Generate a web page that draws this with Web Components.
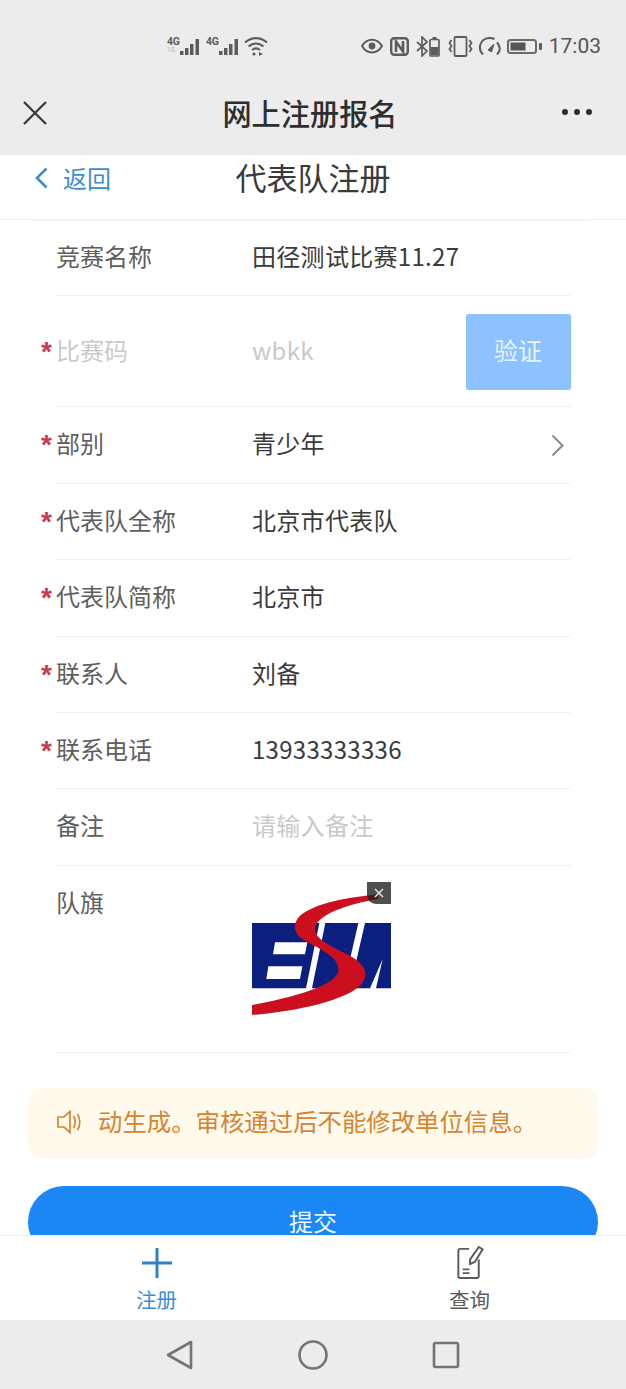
<!DOCTYPE html>
<html lang="zh-CN">
<head>
<meta charset="utf-8">
<title>网上注册报名</title>
<style>
  html, body { margin: 0; padding: 0; background: #fff; }
  body { font-family: "Noto Sans CJK SC", "Noto Sans", sans-serif; }
</style>
</head>
<body>
<reg-app>
  <phone-status></phone-status>
  <title-bar>网上注册报名</title-bar>
  <reg-main>
    <page-head>代表队注册</page-head>
    <form-row label="竞赛名称">田径测试比赛11.27</form-row>
    <form-row label="比赛码" required muted>wbkk<verify-button slot="action">验证</verify-button></form-row>
    <form-row label="部别" required arrow>青少年</form-row>
    <form-row label="代表队全称" required>北京市代表队</form-row>
    <form-row label="代表队简称" required>北京市</form-row>
    <form-row label="联系人" required>刘备</form-row>
    <form-row label="联系电话" required>13933333336</form-row>
    <form-row label="备注" placeholder>请输入备注</form-row>
    <form-row label="队旗" top><team-flag></team-flag></form-row>
    <notice-bar>动生成。审核通过后不能修改单位信息。</notice-bar>
    <submit-button>提交</submit-button>
  </reg-main>
  <tab-bar></tab-bar>
  <nav-keys></nav-keys>
</reg-app>

<script>
// page shell: just a column, the middle part takes what is left
class RegApp extends HTMLElement {
  constructor() {
    super();
    this.attachShadow({ mode: 'open' });
    this.shadowRoot.innerHTML = `
      <style>
        :host { display: flex; flex-direction: column; height: 100vh; overflow: hidden; }
      </style>
      <slot></slot>
    `;
  }
}

class PhoneStatus extends HTMLElement {
  constructor() {
    super();
    this.attachShadow({ mode: 'open' });
    const bars = `
      <svg width="20" height="18" viewBox="0 0 20 18" fill="#5c5c5c">
        <rect x="0" y="13" width="3.500" height="4"/><rect x="5" y="10" width="3.500" height="7"/>
        <rect x="10" y="6" width="3.500" height="11"/><rect x="15.500" y="1" width="3.500" height="16"/>
      </svg>`;
    this.shadowRoot.innerHTML = `
      <style>
        :host {
          display: flex; align-items: center; box-sizing: border-box; flex: none;
          height: 62px; padding: 30px 25px 0 167px; background: #ececec;
          color: #5c5c5c; font-family: Roboto, "Liberation Sans", sans-serif;
        }
        .sig { display: flex; align-items: flex-end; height: 20px; position: relative; }
        .g { font-size: 10.500px; font-weight: 700; line-height: 10px; width: 13px; align-self: flex-start; margin-top: 1px; letter-spacing: -.3px; }
        .g small { display: block; font-size: 7px; line-height: 7px; font-weight: 400; color: #b5b5b5; }
        .s1 { margin-right: 6px; }
        .s2 { margin-right: 5px; }
        .right { margin-left: auto; display: flex; align-items: center; }
        svg { display: block; }
        .time { font-size: 21px; line-height: 32px; margin-left: 7px; color: #555; }
      </style>
      <div class="sig s1"><span class="g">4G<small>1S</small></span>${bars}</div>
      <div class="sig s2"><span class="g">4G</span>${bars}</div>
      <svg width="24" height="20" viewBox="0 0 24 20" fill="none" stroke="#5c5c5c" stroke-width="2.200">
        <path d="M1 6.500C7.500 .6 16.500 .6 23 6.500"/><path d="M4.500 10.500C9 6.500 15 6.500 19.500 10.500"/><path d="M8 14c2.500-2 5.500-2 8 0"/>
        <circle cx="10" cy="18" r="1.600" fill="#5c5c5c" stroke="none"/><path d="M15 16l4 2-4 2z" fill="#5c5c5c" stroke="none"/>
      </svg>
      <div class="right">
        <svg width="22" height="16" viewBox="0 0 22 16" fill="none" stroke="#5c5c5c" stroke-width="2">
          <path d="M1 8c5-8.500 15-8.500 20 0c-5 8.500-15 8.500-20 0z"/><circle cx="11" cy="8" r="3.400" fill="#5c5c5c" stroke="none"/>
        </svg>
        <svg style="margin-left:7px" width="19" height="19" viewBox="0 0 19 19" fill="none" stroke="#5c5c5c">
          <rect x="1.200" y="1.200" width="16.600" height="16.600" rx="3" stroke-width="2.400"/>
          <path d="M6 15V4.500L13 14.500V4" stroke-width="2.600"/>
        </svg>
        <svg style="margin-left:7px" width="24" height="21" viewBox="0 0 24 21" fill="none" stroke="#5c5c5c" stroke-width="1.700">
          <path d="M1 6l10 9-5 5V1l5 5L1 15"/>
          <rect x="14" y="3.500" width="9" height="16.500" rx="1"/><rect x="16.500" y="1" width="4" height="2" fill="#5c5c5c" stroke="none"/>
          <rect x="15" y="11" width="7" height="8" fill="#5c5c5c" stroke="none"/>
        </svg>
        <svg style="margin-left:8px" width="25" height="21" viewBox="0 0 25 21" fill="none" stroke="#5c5c5c" stroke-width="1.800">
          <rect x="6.500" y="1" width="12" height="19" rx="1"/>
          <path d="M3.500 4l-2 3 2 3-2 3 2 3M21.500 4l2 3-2 3 2 3-2 3"/>
        </svg>
        <svg style="margin-left:5px" width="24" height="20" viewBox="0 0 24 20" fill="none" stroke="#5c5c5c" stroke-width="2">
          <path d="M5 18.500C-.5 13 1.500 3 11 2c2.500-.2 4 .3 5.500 1"/><path d="M19 6.500c3.500 4 3.500 8.500 0 12"/>
          <path d="M10 14l6-6-2.500 8z" fill="#5c5c5c" stroke-width="1"/>
        </svg>
        <svg style="margin-left:5px" width="35" height="15" viewBox="0 0 35 15" fill="none">
          <rect x="1" y="1" width="28" height="13" rx="2.500" stroke="#6a6a6a" stroke-width="2"/>
          <rect x="3.500" y="3.500" width="15" height="8" fill="#565656"/>
          <rect x="32" y="4" width="3" height="7" rx="1" fill="#5c5c5c"/>
        </svg>
        <span class="time">17:03</span>
      </div>
    `;
  }
}

class TitleBar extends HTMLElement {
  constructor() {
    super();
    this.attachShadow({ mode: 'open' });
    this.shadowRoot.innerHTML = `
      <style>
        :host {
          display: flex; align-items: center; justify-content: center; position: relative; flex: none;
          box-sizing: border-box; height: 93px; padding: 7px 0 0; background: #ececec;
        }
        .t { font-size: 29.200px; font-weight: 500; color: #2e2e2e; line-height: 40px; position: relative; left: -3px; }
        svg { position: absolute; }
        .x { left: 22px; top: 38px; }
        .more { right: 32px; top: 46px; }
      </style>
      <svg class="x" width="26" height="26" viewBox="0 0 26 26" stroke="#3a3a3a" stroke-width="2.300" fill="none">
        <path d="M2 2l22 22M24 2L2 24"/>
      </svg>
      <span class="t"><slot></slot></span>
      <svg class="more" width="33" height="8" viewBox="0 0 33 8" fill="#2e2e2e">
        <circle cx="4" cy="4" r="3"/><circle cx="16" cy="4" r="3"/><circle cx="28" cy="4" r="3"/>
      </svg>
    `;
  }
}

class RegMain extends HTMLElement {
  constructor() {
    super();
    this.attachShadow({ mode: 'open' });
    this.shadowRoot.innerHTML = `
      <style>
        :host { display: block; flex: 1; min-height: 0; overflow: hidden; background: #fff; }
      </style>
      <slot></slot>
    `;
  }
}

class PageHead extends HTMLElement {
  constructor() {
    super();
    this.attachShadow({ mode: 'open' });
    this.shadowRoot.innerHTML = `
      <style>
        :host {
          display: flex; align-items: center; position: relative; box-sizing: border-box;
          height: 65px; padding: 0 0 19px 35px; border-bottom: 1px solid #f3f3f3;
        }
        :host::after {
          content: ''; position: absolute; left: 32px; right: 36px; bottom: -2px;
          height: 1px; background: #f5f5f5;
        }
        .back { display: flex; align-items: center; gap: 15px; color: #3d8ed0; font-size: 24px; line-height: 44px; }
        .t {
          position: absolute; left: 0; right: 0; top: -2px; text-align: center;
          font-size: 31px; line-height: 48px; color: #3a3a3a; pointer-events: none;
        }
      </style>
      <div class="back">
        <svg width="13" height="22" viewBox="0 0 13 22" fill="none" stroke="#3d8ed0" stroke-width="2.600"><path d="M11.500 1.500L2 11l9.500 9.500"/></svg>
        <span>返回</span>
      </div>
      <div class="t"><slot></slot></div>
    `;
  }
}

// one line of the form. label comes as attribute, value as slot
class FormRow extends HTMLElement {
  constructor() {
    super();
    this.attachShadow({ mode: 'open' });
    const req = this.hasAttribute('required');
    const label = this.getAttribute('label') || '';
    this.shadowRoot.innerHTML = `
      <style>
        :host {
          display: grid; grid-template-columns: 196px 1fr auto; align-items: center;
          margin: 0 55.500px 0 56px; border-bottom: 1px solid #f1f1f1;
          font-size: 24px; color: #3a3a3a;
        }
        :host([top]) { align-items: start; }
        .label { line-height: 71.400px; padding-bottom: 4px; color: #5e5e5e; white-space: nowrap; }
        .star {
          display: inline-block; width: 15px; margin-left: -15px; color: #c93a55;
          font: 700 28px/0 "Liberation Sans", sans-serif; vertical-align: -1px;
        }
        .value { line-height: 71.400px; padding-bottom: 4px; letter-spacing: .3px; }
        :host([top]) .value { padding-bottom: 0; line-height: 1; }
        :host([muted]) .label, :host([muted]) .value, :host([placeholder]) .value { color: #c9c9c9; }
        .arrow { margin-right: 7px; display: block; }
        slot[name=action] { display: block; }
      </style>
      <div class="label">${req ? '<span class="star">*</span>' : ''}${label}</div>
      <div class="value"><slot></slot></div>
      <slot name="action">
        ${this.hasAttribute('arrow')
          ? '<svg class="arrow" width="13" height="23" viewBox="0 0 13 23" fill="none" stroke="#8a8a8a" stroke-width="2"><path d="M1.500 1.500l10 10-10 10"/></svg>'
          : ''}
      </slot>
    `;
  }
}

class VerifyButton extends HTMLElement {
  constructor() {
    super();
    this.attachShadow({ mode: 'open' });
    this.shadowRoot.innerHTML = `
      <style>
        :host {
          display: flex; align-items: center; justify-content: center; box-sizing: border-box;
          width: 105px; height: 76px; margin: 18px 0 16px; padding-bottom: 5px; border-radius: 3px;
          background: #8cc2ff; color: #e9f3ff; font-size: 24px;
        }
      </style>
      <slot></slot>
    `;
  }
}

class TeamFlag extends HTMLElement {
  constructor() {
    super();
    this.attachShadow({ mode: 'open' });
    this.shadowRoot.innerHTML = `
      <style>
        :host { display: block; position: relative; width: 139px; height: 140px; margin: 15px 0 31px; overflow: hidden; }
        svg.logo { display: block; filter: blur(.7px); }
        .del {
          position: absolute; right: 0; top: 1px; width: 24px; height: 22px;
          background: rgba(30, 30, 30, .78); border-bottom-left-radius: 9px;
          display: flex; align-items: center; justify-content: center;
        }
      </style>
      <svg class="logo" width="139" height="140" viewBox="6 6 417 420">
        <path fill="#0b1f7f" fill-rule="evenodd" d="M6 132H208L168 328H6ZM75 190L69 226H165L172 190ZM55 262L49 300H150L157 262Z"/>
        <path fill="#0b1f7f" d="M226 132H325L280 328H186Z"/>
        <path fill="#0b1f7f" d="M345 132H423V328H378L398 240L360 328H300Z"/>
        <path fill="#cc0f1f" d="M385 46C300 55 200 70 150 110C125 135 130 165 165 185C210 210 270 235 265 275C260 310 180 345 6 378V408C150 395 280 365 330 320C365 285 340 250 290 225C240 200 195 180 195 150C195 110 290 75 385 60Z"/>
      </svg>
      <div class="del">
        <svg width="10" height="10" viewBox="0 0 10 10" stroke="#eee" stroke-width="1.400"><path d="M1 1l8 8M9 1L1 9"/></svg>
      </div>
    `;
  }
}

class NoticeBar extends HTMLElement {
  constructor() {
    super();
    this.attachShadow({ mode: 'open' });
    this.shadowRoot.innerHTML = `
      <style>
        :host {
          display: flex; align-items: center; box-sizing: border-box;
          height: 69px; margin: 35px 28px 0; padding: 0 0 3px 29px; border-radius: 14px;
          background: #fffaeb; box-shadow: 0 1px 2px rgba(0, 0, 0, .04);
          color: #d6842f; font-size: 24.400px; white-space: nowrap; overflow: hidden;
        }
        svg { display: block; margin: 3px 16px 0 0; flex: none; }
      </style>
      <svg width="25" height="24" viewBox="0 0 25 24" fill="none" stroke="#d6842f" stroke-width="1.700">
        <path d="M1 7h6l6-5.500v21L7 17H1z"/><path d="M16.500 6c2 3.500 2 8.500 0 12"/><path d="M20.500 4c3 4.500 3 11.500 0 16"/>
      </svg>
      <span><slot></slot></span>
    `;
  }
}

class SubmitButton extends HTMLElement {
  constructor() {
    super();
    this.attachShadow({ mode: 'open' });
    this.shadowRoot.innerHTML = `
      <style>
        :host {
          display: flex; align-items: center; justify-content: center; box-sizing: border-box;
          height: 72px; margin: 29px 28px 0; padding-bottom: 1px; border-radius: 36px;
          background: #1a87f5; color: #eef6ff; font-size: 24px; line-height: 24px;
        }
      </style>
      <slot></slot>
    `;
  }
}

class TabBar extends HTMLElement {
  constructor() {
    super();
    this.attachShadow({ mode: 'open' });
    this.shadowRoot.innerHTML = `
      <style>
        :host {
          display: grid; grid-template-columns: 1fr 1fr; box-sizing: border-box;
          height: 85px; border-top: 1px solid #eee; background: #fff; flex: none;
        }
        .tab { display: flex; flex-direction: column; align-items: center; justify-content: flex-end; padding-bottom: 7px; font-size: 20.500px; line-height: 28px; color: #5c5c5c; }
        .tab.on { color: #3a8ed4; }
        svg { display: block; }
        .plus { margin-bottom: 7px; }
        .query { margin-bottom: 5px; }
      </style>
      <div class="tab on">
        <svg class="plus" width="30" height="30" viewBox="0 0 30 30" stroke="#2f80cc" stroke-width="3" fill="none"><path d="M15 0v30M0 15h30"/></svg>
        注册
      </div>
      <div class="tab">
        <svg class="query" width="30" height="35" viewBox="0 0 30 36" fill="none" stroke="#5c5c5c" stroke-width="2">
          <path d="M14 4H5a2 2 0 0 0-2 2v26a2 2 0 0 0 2 2h17a2 2 0 0 0 2-2V15"/>
          <path d="M15 15L24 2l4 2.500-8 13-5 2z"/><path d="M7.500 25h7M7.500 29h7" stroke-width="1.800"/>
        </svg>
        查询
      </div>
    `;
  }
}

class NavKeys extends HTMLElement {
  constructor() {
    super();
    this.attachShadow({ mode: 'open' });
    this.shadowRoot.innerHTML = `
      <style>
        :host {
          display: flex; align-items: center; justify-content: center; gap: 104px;
          height: 69px; background: #ececec; flex: none; padding-top: 1px; box-sizing: border-box;
        }
        svg { display: block; }
      </style>
      <svg width="28" height="30" viewBox="0 0 28 30" fill="none" stroke="#747474" stroke-width="2.600" stroke-linejoin="round"><path d="M25 2v26L2 15z"/></svg>
      <svg width="30" height="30" viewBox="0 0 30 30" fill="none" stroke="#747474" stroke-width="2.600"><circle cx="15" cy="15" r="13.500"/></svg>
      <svg width="28" height="28" viewBox="0 0 28 28" fill="none" stroke="#747474" stroke-width="2.600" stroke-linejoin="round"><rect x="2" y="2" width="24" height="24" rx="1.500"/></svg>
    `;
  }
}

customElements.define('reg-app', RegApp);
customElements.define('phone-status', PhoneStatus);
customElements.define('title-bar', TitleBar);
customElements.define('reg-main', RegMain);
customElements.define('page-head', PageHead);
customElements.define('form-row', FormRow);
customElements.define('verify-button', VerifyButton);
customElements.define('team-flag', TeamFlag);
customElements.define('notice-bar', NoticeBar);
customElements.define('submit-button', SubmitButton);
customElements.define('tab-bar', TabBar);
customElements.define('nav-keys', NavKeys);
</script>
</body>
</html>
